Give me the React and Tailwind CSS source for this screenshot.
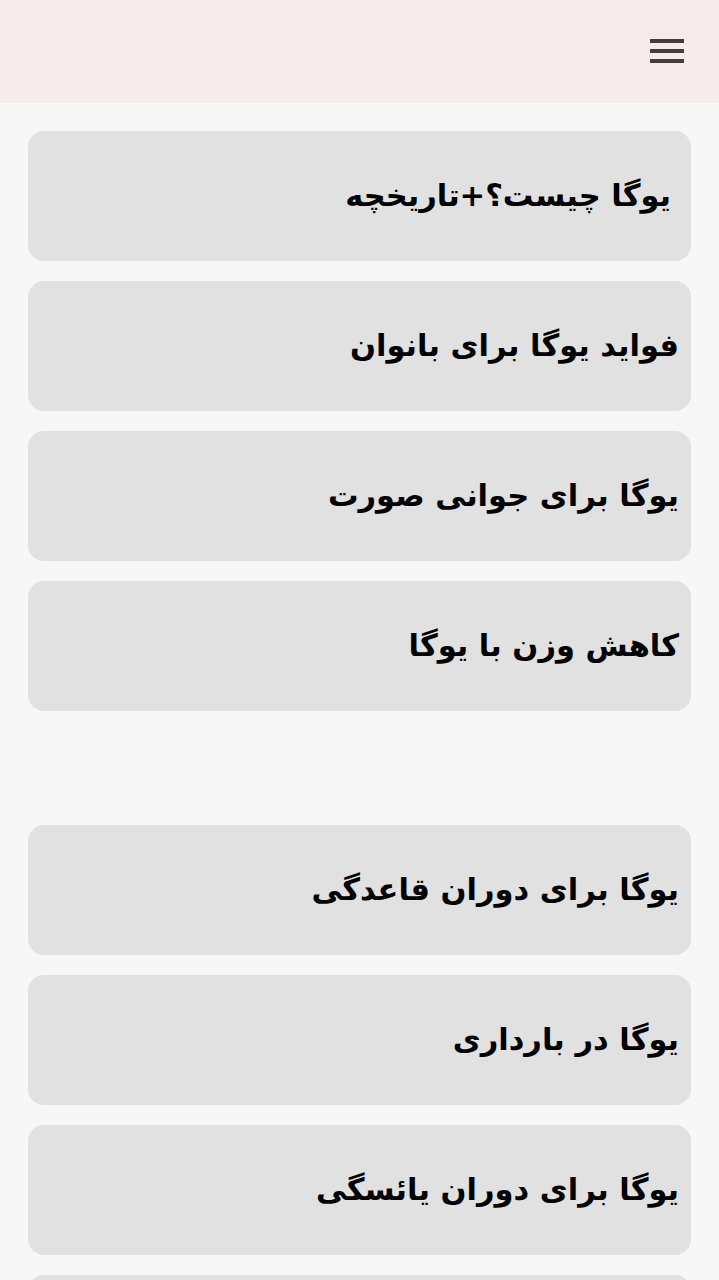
const topItems = [
  { title: 'یوگا چیست؟+تاریخچه', pad: 'pr-[20px]' },
  { title: 'فواید یوگا برای بانوان', pad: 'pr-3' },
  { title: 'یوگا برای جوانی صورت', pad: 'pr-3' },
  { title: 'کاهش وزن با یوگا', pad: 'pr-3' },
];

const bottomItems = [
  'یوگا برای دوران قاعدگی',
  'یوگا در بارداری',
  'یوگا برای دوران یائسگی',
  'یوگا برای خواب بهتر',
];

const Card = ({ title, pad = 'pr-3' }) => (
  <div
    className={`h-[130px] rounded-[16px] bg-[#e1e1e1] flex items-center ${pad} pl-4`}
  >
    <p className="text-[30.5px] font-bold text-black leading-none">{title}</p>
  </div>
);

export default function App() {
  return (
    <div
      dir="rtl"
      className="bg-[#f7f7f7] overflow-hidden h-[1280px]"
      style={{ fontFamily: '"DejaVu Sans", sans-serif' }}
    >
      <header className="h-[103px] bg-[#f7eceb] flex items-center px-[35px]">
        <button className="w-[34px] flex flex-col gap-[6px] pb-[2px]">
          <span className="block h-[4px] w-full bg-[#433d3d]" />
          <span className="block h-[4px] w-full bg-[#433d3d]" />
          <span className="block h-[4px] w-full bg-[#433d3d]" />
        </button>
      </header>

      <div className="px-[28px] pt-[28px] flex flex-col gap-[20px]">
        {topItems.map((item) => (
          <Card key={item.title} title={item.title} pad={item.pad} />
        ))}
      </div>

      <div className="px-[28px] mt-[114px] flex flex-col gap-[20px]">
        {bottomItems.map((t) => (
          <Card key={t} title={t} />
        ))}
      </div>
    </div>
  );
}
